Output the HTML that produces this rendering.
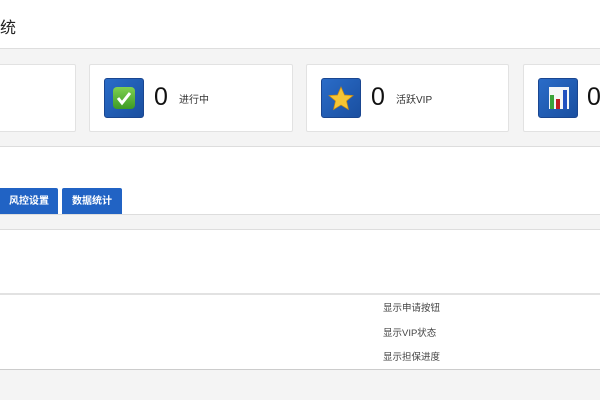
<!DOCTYPE html>
<html><head><meta charset="utf-8"><style>
*{margin:0;padding:0;box-sizing:border-box}
body{width:600px;height:400px;overflow:hidden;background:#f4f4f4;font-family:"Liberation Sans","Noto Sans CJK SC",sans-serif;position:relative}
.abs{position:absolute}
.card{position:absolute;top:64px;height:68px;background:#fff;border:1px solid #e2e2e2;border-radius:2px}
.ic{position:absolute;top:78px;width:40px;height:40px;border-radius:3px;background:linear-gradient(135deg,#2a6cc8,#1a4fa0);border:1px solid #1a4690}
.num{position:absolute;top:83px;font-size:25px;color:#111;font-weight:300}
.lbl{position:absolute;top:91px;font-size:10px;color:#333}
.btn{position:absolute;top:188px;height:26px;background:#2163c4;color:#fff;font-size:10px;font-weight:bold;line-height:28px;text-align:center;border-radius:2px 2px 0 0}
.t{position:absolute;left:383px;font-size:9.5px;color:#444}
</style></head><body>
<div class="abs" style="left:0;top:0;width:600px;height:49px;background:#fff;border-bottom:1px solid #dedede"></div>
<div class="abs" style="left:0;top:14px;font-size:16px;color:#222">统</div>
<div class="card" style="left:-5px;width:81px"></div>
<div class="card" style="left:89px;width:204px"></div>
<div class="card" style="left:306px;width:203px"></div>
<div class="card" style="left:523px;width:90px"></div>
<div class="ic" style="left:104px"><div class="abs" style="left:8px;top:8px;width:22px;height:22px;border-radius:4px;background:linear-gradient(#7fd050,#3c9a25)"><svg width="22" height="22"><path d="M5 11l4 5 8-10" stroke="#fff" stroke-width="3" fill="none"/></svg></div></div>
<div class="num" style="left:154px">0</div><div class="lbl" style="left:179px">进行中</div>
<div class="ic" style="left:321px"><svg width="40" height="40" class="abs" style="left:0;top:0"><polygon points="19,8 22.5,16 31,16.5 24.5,22 26.5,30.5 19,26 11.5,30.5 13.5,22 7,16.5 15.5,16" fill="#f6c534" stroke="#c98a10" stroke-width="0.7"/></svg></div>
<div class="num" style="left:371px">0</div><div class="lbl" style="left:396px">活跃VIP</div>
<div class="ic" style="left:538px"><div class="abs" style="left:10px;top:8px;width:20px;height:22px;background:#f4f6f8"></div><div class="abs" style="left:11px;top:16px;width:4px;height:14px;background:#3aa33a"></div><div class="abs" style="left:17px;top:20px;width:4px;height:10px;background:#c02020"></div><div class="abs" style="left:24px;top:11px;width:4px;height:19px;background:#2050c0"></div></div>
<div class="num" style="left:587px">0</div>
<div class="abs" style="left:0;top:146px;width:600px;height:69px;background:#fff;border-top:1px solid #ddd;border-bottom:1px solid #ddd"></div>
<div class="btn" style="left:-4px;width:62px;padding-left:4px">风控设置</div>
<div class="btn" style="left:62px;width:60px">数据统计</div>
<div class="abs" style="left:0;top:229px;width:600px;height:141px;background:#fff;border-top:1px solid #ddd;border-bottom:1px solid #ccc"></div>
<div class="abs" style="left:0;top:293px;width:600px;height:2px;background:#e2e2e2"></div>
<div class="t" style="top:300px">显示申请按钮</div>
<div class="t" style="top:325px">显示VIP状态</div>
<div class="t" style="top:349px">显示担保进度</div>
</body></html>
